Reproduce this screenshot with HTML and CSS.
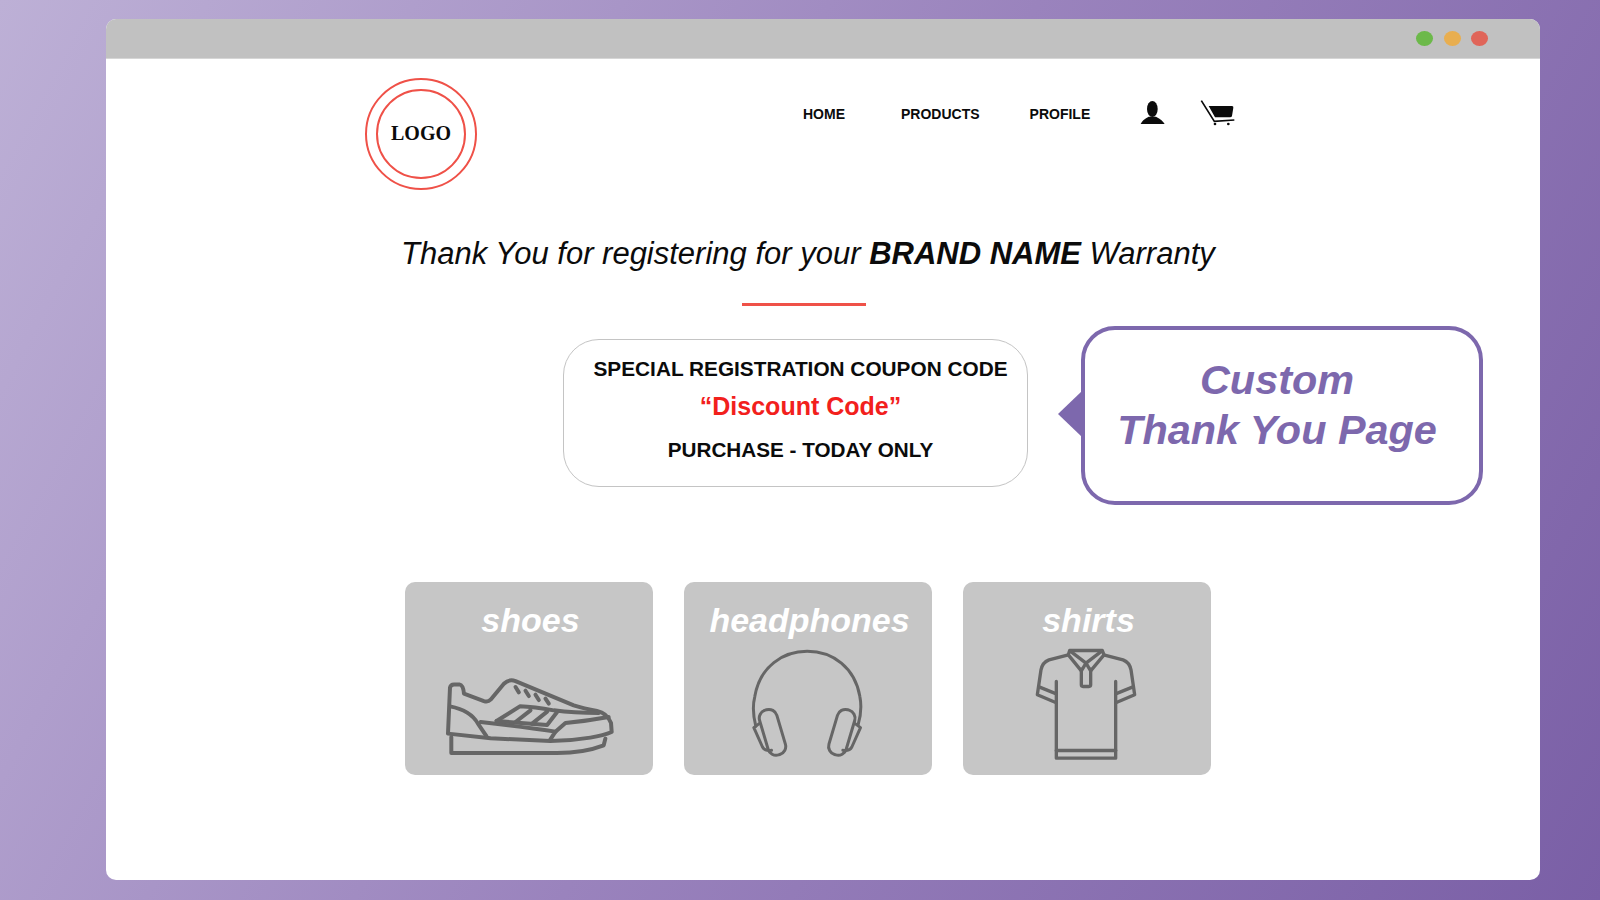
FILE: index.html
```html
<!DOCTYPE html>
<html>
<head>
    <title>Thank You Page</title>
    <link rel="stylesheet" href="styles.css">
</head>
<body>
    <div class="window">
        <div class="titlebar">
            <span class="dot dot-green"></span>
            <span class="dot dot-yellow"></span>
            <span class="dot dot-red"></span>
        </div>
        <div class="page">
            <header class="header">
                <div class="logo">
                    <div class="logo-inner">LOGO</div>
                </div>
                <nav class="nav">
                    <a class="nav-home" href="#">HOME</a>
                    <a class="nav-products" href="#">PRODUCTS</a>
                    <a class="nav-profile" href="#">PROFILE</a>
                    <svg class="icon-user" viewBox="120 270 75 75">
                        <ellipse cx="157" cy="297" rx="16" ry="24"/>
                        <path d="M122 342 Q126 330 146 320 L168 320 Q188 330 194 342 Z"/>
                    </svg>
                    <svg class="icon-cart" viewBox="302 270 105 78">
                        <path class="cart-line" d="M306 272 L345 334 L405 330"/>
                        <path d="M328 288 L398 288 Q403 288 402 293 L398 318 Q397 322 392 322 L347 322 Z"/>
                        <circle cx="347" cy="342" r="4"/>
                        <circle cx="387" cy="342" r="4"/>
                    </svg>
                </nav>
            </header>

            <h1 class="thanks">Thank You for registering for your <b>BRAND NAME</b> Warranty</h1>
            <div class="divider"></div>

            <div class="offer-row">
                <div class="coupon">
                    <p class="coupon-title">SPECIAL REGISTRATION COUPON CODE</p>
                    <p class="coupon-code">“Discount Code”</p>
                    <p class="coupon-note">PURCHASE - TODAY ONLY</p>
                </div>
                <div class="callout">Custom<br>Thank You Page</div>
            </div>

            <div class="cards">
                <div class="card">
                    <div class="card-title">shoes</div>
                    <svg class="card-icon icon-shoe" viewBox="160 320 520 240">
                        <path d="M172 490 L178 352 Q180 342 190 342 L206 342 Q218 344 220 370 L280 392 Q292 396 300 388 L340 340 Q355 325 375 332 L550 405 Q580 415 620 422 Q650 428 662 458 L664 485 Q640 495 600 502 Q540 512 480 512 L300 504 Z"/>
                        <path d="M182 500 L182 548 L500 548 Q580 548 640 525 L645 505"/>
                        <path d="M178 408 Q240 420 262 460 L288 498"/>
                        <path d="M270 455 Q400 470 495 484 L478 510"/>
                        <path d="M495 484 L525 458 Q590 452 655 440"/>
                        <path d="M318 452 L388 408 Q430 410 490 420 Q550 428 625 428"/>
                        <path d="M318 452 L470 464 L500 425"/>
                        <path d="M375 455 L420 420"/>
                        <path d="M425 460 L470 424"/>
                        <path d="M375 350 L385 366"/>
                        <path d="M405 361 L415 377"/>
                        <path d="M435 373 L445 389"/>
                        <path d="M465 385 L475 400"/>
                    </svg>
                </div>
                <div class="card">
                    <div class="card-title">headphones</div>
                    <svg class="card-icon icon-phones" viewBox="235 235 350 330">
                        <path d="M258 470 Q245 420 255 380 C270 290 340 245 412 245 C490 245 555 295 570 380 Q578 420 565 465"/>
                        <rect x="281" y="418" width="54" height="140" rx="25" transform="rotate(-16.5 308 488)"/>
                        <rect x="489" y="418" width="54" height="140" rx="25" transform="rotate(16.5 516 488)"/>
                        <path d="M268 462 L252 474 L278 532 Q285 545 305 542"/>
                        <path d="M556 462 L572 474 L546 532 Q539 545 519 542"/>
                    </svg>
                </div>
                <div class="card">
                    <div class="card-title">shirts</div>
                    <svg class="card-icon icon-shirt" viewBox="255 235 312 335">
                        <path d="M322 335 L322 565 L500 565 L500 335"/>
                        <path d="M322 542 L500 542"/>
                        <path d="M358 255 L300 270 Q280 278 276 300 L265 375 L320 398"/>
                        <path d="M272 352 L322 372"/>
                        <path d="M464 255 L522 270 Q542 278 546 300 L557 375 L502 398"/>
                        <path d="M550 352 L500 372"/>
                        <path d="M362 242 L460 242 L465 255 L425 303 L411 280 L397 303 L358 255 Z"/>
                        <path d="M364 244 L411 280 L458 244"/>
                        <path d="M397 298 L397 345 Q397 350 402 350 L420 350 Q425 350 425 345 L425 298"/>
                    </svg>
                </div>
            </div>
        </div>
    </div>
</body>
</html>
```
FILE: styles.css
```css
html, body {
    height: 100%;
}

body {
    margin: 0;
    padding: 19px 60px 20px 106px;
    box-sizing: border-box;
    overflow: hidden;
    background: linear-gradient(118deg, #bdb0d6 0%, #9a83bd 50%, #7a5fa6 100%);
    font-family: 'Liberation Sans', Arial, sans-serif;
    color: #0b0b0b;
}

.window {
    height: 861px;
    background-color: #fff;
    border-radius: 10px;
    overflow: hidden;
}

.titlebar {
    height: 40px;
    background-color: #c1c1c1;
    border-bottom: 1px solid #d6d6d6;
    box-sizing: border-box;
    display: flex;
    align-items: center;
    justify-content: flex-end;
    gap: 10.5px;
    padding-right: 52px;
}

.dot {
    width: 17px;
    height: 15px;
    border-radius: 50%;
}

.dot-green { background-color: #6cb94a; }
.dot-yellow { background-color: #e8ae50; }
.dot-red { background-color: #e06559; }

.page {
    padding-top: 19px;
}

/* logo and menu */
.header {
    display: flex;
    padding-left: 259px;
}

.logo {
    width: 112px;
    height: 112px;
    box-sizing: border-box;
    border: 2px solid #ef5148;
    border-radius: 50%;
    display: flex;
    align-items: center;
    justify-content: center;
}

.logo-inner {
    width: 90px;
    height: 90px;
    box-sizing: border-box;
    border: 2px solid #ef5148;
    border-radius: 50%;
    padding-bottom: 1px;
    display: flex;
    align-items: center;
    justify-content: center;
    font-family: 'Liberation Serif', serif;
    font-weight: bold;
    font-size: 20px;
}

.nav {
    display: flex;
    align-items: flex-start;
    padding-top: 22px;
    margin-left: 326px;
}

.nav a {
    color: #0b0b0b;
    text-decoration: none;
    font-size: 14px;
    font-weight: bold;
    line-height: 22px;
    margin-top: 3px;
}

.nav-products { margin-left: 56px; }
.nav-profile { margin-left: 50px; }

.icon-user {
    width: 25px;
    height: 25px;
    margin-left: 50px;
    fill: #0b0b0b;
}

.icon-cart {
    width: 35px;
    height: 26px;
    margin-left: 35px;
    fill: #0b0b0b;
}

.cart-line {
    fill: none;
    stroke: #0b0b0b;
    stroke-width: 5;
}

/* thank you line */
.thanks {
    margin: 44px 0 0 0;
    padding-left: 295px;
    font-size: 31px;
    font-style: italic;
    font-weight: normal;
    line-height: 40px;
    white-space: nowrap;
}

.divider {
    width: 124px;
    height: 3px;
    margin: 29px 0 0 636px;
    background-color: #ef5148;
}

/* coupon and callout */
.offer-row {
    display: flex;
    align-items: flex-start;
    margin-top: 20px;
    padding-left: 457px;
}

.coupon {
    width: 465px;
    height: 148px;
    margin-top: 13px;
    box-sizing: border-box;
    border: 1.5px solid #c4c4c4;
    border-radius: 36px;
    padding: 14px 0 0 10px;
    text-align: center;
    font-weight: bold;
}

.coupon p {
    margin: 0;
}

.coupon-title {
    font-size: 20.8px;
    line-height: 30px;
}

.coupon-code {
    font-size: 25px;
    line-height: 34px;
    margin-top: 5px !important;
    color: #f2201c;
}

.coupon-note {
    font-size: 20.7px;
    line-height: 30px;
    margin-top: 12px !important;
}

.callout {
    position: relative;
    width: 402px;
    height: 179px;
    margin-left: 53px;
    box-sizing: border-box;
    border: 4px solid #7d68ad;
    border-radius: 34px;
    padding-top: 25px;
    padding-right: 10px;
    text-align: center;
    font-size: 41.4px;
    font-weight: bold;
    font-style: italic;
    line-height: 50px;
    color: #7d68ad;
}

.callout::before {
    content: "";
    position: absolute;
    left: -27px;
    top: 61px;
    border-style: solid;
    border-width: 23px 24px 23px 0;
    border-color: transparent #7d68ad transparent transparent;
}

/* category cards */
.cards {
    display: flex;
    gap: 31px;
    margin-top: 77px;
    padding-left: 299px;
}

.card {
    position: relative;
    width: 248px;
    height: 193px;
    background-color: #c6c6c6;
    border-radius: 10px;
    display: flex;
    flex-direction: column;
    align-items: center;
}

.card-title {
    margin-top: 18px;
    padding-left: 3px;
    font-size: 34px;
    font-weight: bold;
    font-style: italic;
    line-height: 40px;
    color: #fff;
}

.card-icon {
    position: absolute;
    fill: none;
    stroke: #666;
    stroke-linejoin: round;
    stroke-linecap: round;
}

.icon-shoe {
    left: 39px;
    top: 95px;
    width: 173px;
    height: 80px;
    stroke-width: 12;
}

.icon-phones {
    left: 64px;
    top: 66px;
    width: 117px;
    height: 110px;
    stroke-width: 9;
}

.icon-shirt {
    left: 71px;
    top: 66px;
    width: 104px;
    height: 112px;
    stroke-width: 10;
}
```
